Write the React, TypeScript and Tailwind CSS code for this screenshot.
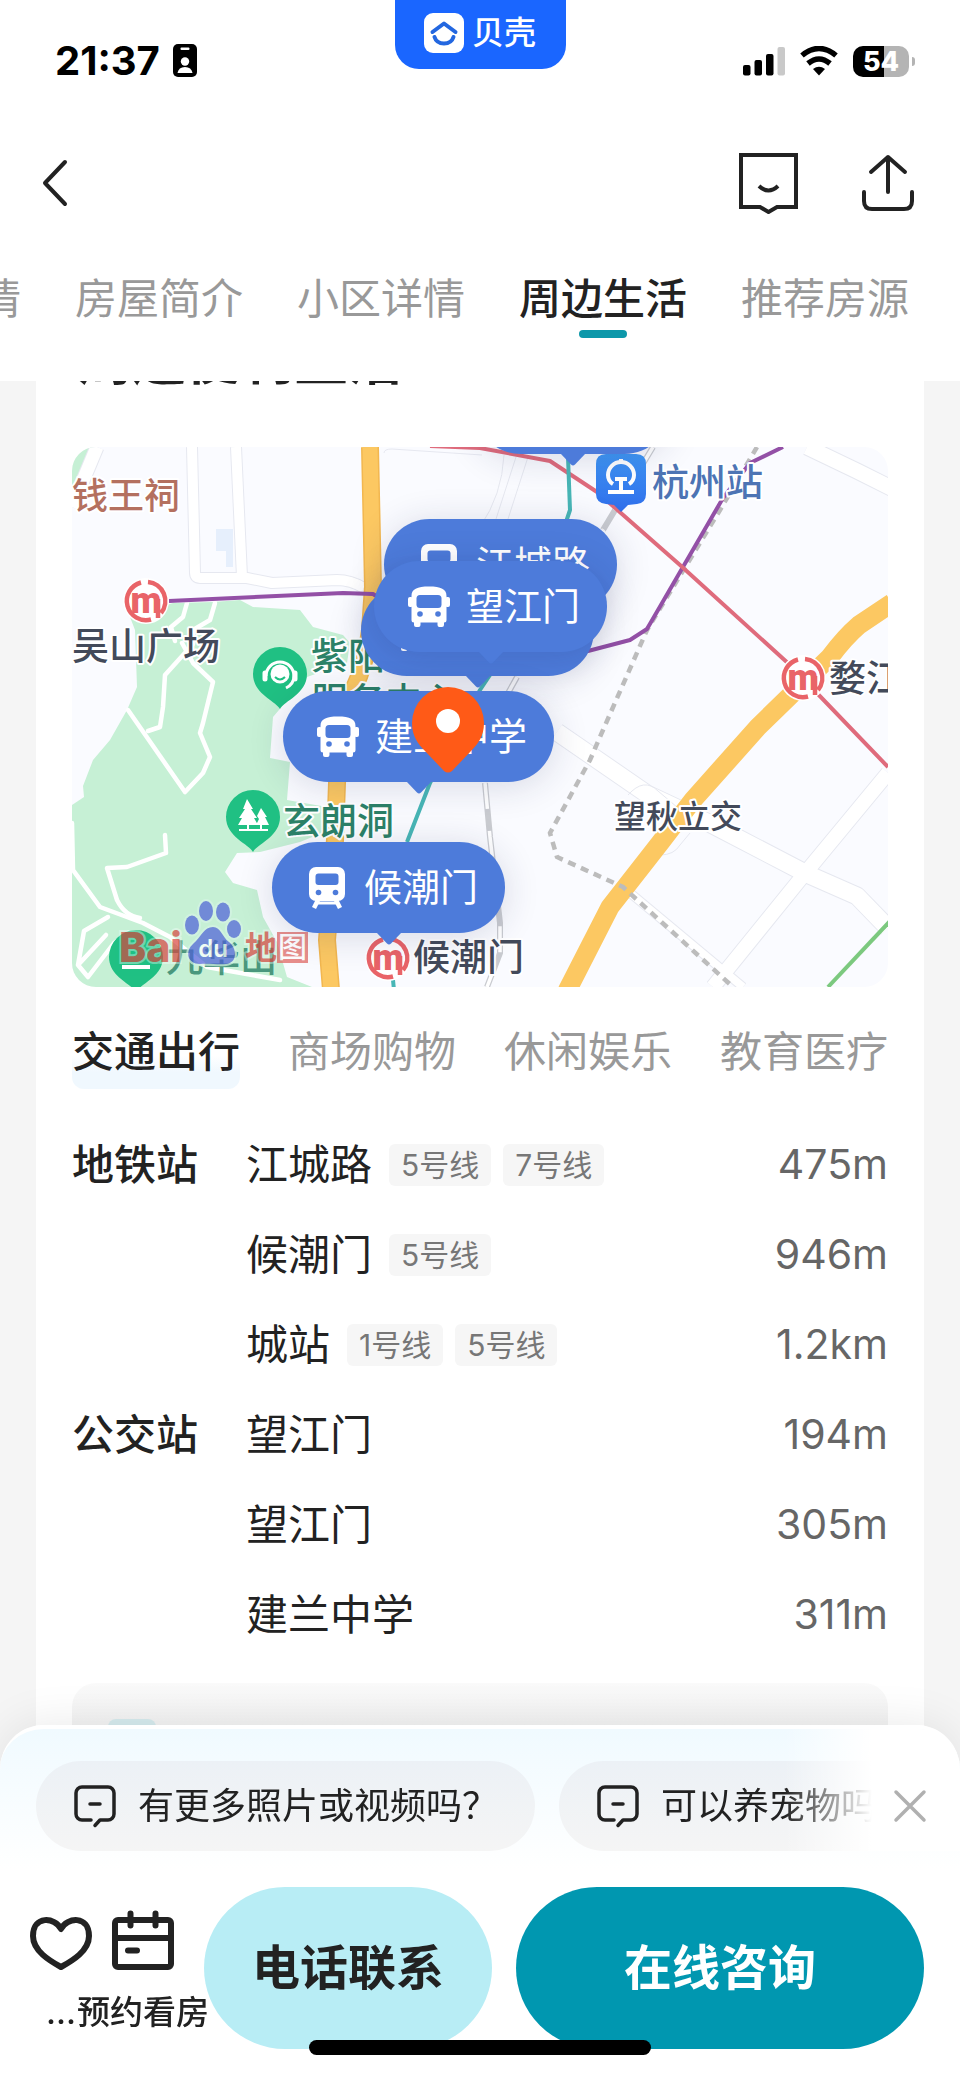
import type { ReactNode } from 'react';

const tabs = ['房源详情', '房屋简介', '小区详情', '周边生活', '推荐房源'];
const categories = ['交通出行', '商场购物', '休闲娱乐', '教育医疗'];

type Stop = { name: string; lines?: string[]; distance: string };

const groups: { title: string; stops: Stop[] }[] = [
  {
    title: '地铁站',
    stops: [
      { name: '江城路', lines: ['5号线', '7号线'], distance: '475m' },
      { name: '候潮门', lines: ['5号线'], distance: '946m' },
      { name: '城站', lines: ['1号线', '5号线'], distance: '1.2km' },
    ],
  },
  {
    title: '公交站',
    stops: [
      { name: '望江门', distance: '194m' },
      { name: '望江门', distance: '305m' },
      { name: '建兰中学', distance: '311m' },
    ],
  },
];

const pins = [
  { name: '城站', icon: 'train', place: 'left-[403px] -top-[84px]' },
  { name: '江城路', icon: 'train', place: 'left-[312px] top-[72px]' },
  { name: '望江门', icon: 'bus', place: 'left-[289px] top-[138px]' },
  { name: '望江门', icon: 'bus', place: 'left-[302px] top-[114px]' },
  { name: '建兰中学', icon: 'bus', place: 'left-[211px] top-[244px]' },
  { name: '候潮门', icon: 'train', place: 'left-[200px] top-[395px]' },
];

function BusIcon() {
  return (
    <svg viewBox="0 0 42 42" className="size-[42px] shrink-0" fill="#fff">
      <path d="M3.500 10C3.500 3 9 0.500 21 0.500S38.500 3 38.500 10V34a2.500 2.500 0 0 1-2.500 2.500V39a2 2 0 0 1-2 2h-2.500a2 2 0 0 1-2-2v-2.500h-17V39a2 2 0 0 1-2 2H8a2 2 0 0 1-2-2v-2.500A2.500 2.500 0 0 1 3.500 34Z" />
      <rect x="0" y="11" width="5" height="10" rx="2" />
      <rect x="37" y="11" width="5" height="10" rx="2" />
      <rect x="8.500" y="9" width="25" height="13" rx="3.500" fill="#4d7bda" />
      <circle cx="12" cy="28" r="2.800" fill="#4d7bda" />
      <circle cx="30" cy="28" r="2.800" fill="#4d7bda" />
    </svg>
  );
}

function TrainIcon() {
  return (
    <svg viewBox="0 0 42 42" className="size-[42px] shrink-0" fill="#fff">
      <rect x="3" y="0" width="36" height="34" rx="7" />
      <path d="M12 33 8 41M30 33l4 8" stroke="#fff" strokeWidth="4.500" />
      <path d="M11 36h20" stroke="#fff" strokeWidth="3" />
      <rect x="9.500" y="6.500" width="23" height="11.500" rx="3" fill="#4d7bda" />
      <circle cx="12.500" cy="25.500" r="2.800" fill="#4d7bda" />
      <circle cx="29.500" cy="25.500" r="2.800" fill="#4d7bda" />
    </svg>
  );
}

function ChatIcon() {
  return (
    <svg viewBox="0 0 44 44" className="size-11 shrink-0" fill="none" stroke="#222" strokeWidth="3.500" strokeLinecap="round" strokeLinejoin="round">
      <path d="M18 36H9a6 6 0 0 1-6-6V9a6 6 0 0 1 6-6h26a6 6 0 0 1 6 6v21a6 6 0 0 1-6 6h-8l-5 5.500" />
      <path d="M17 20h10" />
    </svg>
  );
}

function Metro({ x, y }: { x: number; y: number }) {
  return (
    <g transform={`translate(${x} ${y})`}>
      <circle r="23" fill="#fff" />
      <path d="M-5-18.500A19 19 0 1 0 5 18.500M12 17V-2M2-19A19 19 0 0 1 15 12" fill="none" stroke="#e96468" strokeWidth="4.500" />
      <text y="12" textAnchor="middle" fontFamily="Roboto, sans-serif" fontSize="36" fontWeight="900" fill="#e96468">m</text>
    </g>
  );
}

function GreenPin({ x, y, children }: { x: number; y: number; children?: ReactNode }) {
  return (
    <g transform={`translate(${x} ${y})`}>
      <path d="M0 35C-4 27-27 20-27 0a27 27 0 0 1 54 0C27 20 4 27 0 35Z" fill="#20c083" />
      {children}
    </g>
  );
}

function Label({ x, y, fill, size = 37, children }: { x: number; y: number; fill: string; size?: number; children: string }) {
  return (
    <text x={x} y={y} fill={fill} fontSize={size} fontWeight="500" stroke="#fff" strokeWidth="4" strokeLinejoin="round" paintOrder="stroke">
      {children}
    </text>
  );
}

const roads = [
  { d: 'M25 0 0 60', w: 13 },
  { d: 'M120 0l3 126q0 5 5 5h47l25 5 65-3q14 0 27 8', w: 10 },
  { d: 'M164 0l6 130', w: 10 },
  { d: 'M485 285l90 62 64 30 96 50 50 22 31 32', w: 17 },
  { d: 'M816 326 730 430l-89 110', w: 14 },
  { d: 'M735 0l50 24 40 20', w: 15 },
  { d: 'M551 440l120 100', w: 8 },
];

const trails = [
  'M143 156l-5 17-17 10v14l-28 31-2 32-3 20-12 4',
  'M110 196l11 20 20 19-10 41-3 10 10 24-7 16-18 19-57-82',
  'M115 156l-4 14-12 10 4 14',
  'M93 388l1 18-39 14-20 1 10 32q8 16 23 18',
  'M0 376l1 47 27 37 43 16 27 14 37 30 73 13',
  'M36 470l-24 14-6 34 10 12 26-34 14-10M6 518l28-30',
];

function MapArt() {
  return (
    <svg viewBox="0 0 816 540" preserveAspectRatio="xMinYMin slice" className="h-full w-full" fontFamily="Inter, 'Noto Sans CJK SC', sans-serif">
      <rect width="816" height="540" fill="#fafbff" />
      <path d="M144 82h17v38h-7v-16h-10Z" fill="#e6effc" />
      <path d="M0 16Q4 4 11 0h14L0 46Z" fill="#c6f0d5" />
      <path
        d="M58 170l43-14 40-1 27-2 13 7 47 3 13 17 30 8 7 8-3 20-40 14-34 40-3 41 20 4-3 38 40 7v24l-27 11-40 10-23 1-12 19 8 11 24 7 6 27 14 25 10 35 25 10H0V358l12-8-1-11 10-26 17-20 17-30 10-23-2-57Z"
        fill="#c6f0d5"
      />
      {roads.map((road) => (
        <path key={road.d} d={road.d} fill="none" stroke="#e6e8f0" strokeWidth={road.w + 2} strokeLinejoin="round" />
      ))}
      {roads.map((road) => (
        <path key={road.d} d={road.d} fill="none" stroke="#fff" strokeWidth={road.w} strokeLinejoin="round" />
      ))}
      <g fill="none" stroke="#e6e8f0" strokeWidth="1">
        <path d="M312 6q0-4 8-4l90 6M432 8q-2 40-24 72M444 10l-20 62M456 10l-20 62" />
        <path d="M556 348q16-18 30-4l26 22M588 408q14 0 20-10l10-12" />
      </g>
      {trails.map((d) => (
        <path key={d} d={d} fill="none" stroke="#fff" strokeWidth="4.500" strokeLinejoin="round" strokeLinecap="round" />
      ))}

      {/* Rail tracks */}
      <path d="M581 0l-50 83M445 230l-10 18M413 336l5 54 10 86v30l-13 34" fill="none" stroke="#c9cbd0" strokeWidth="6" />
      <path d="M581 0l-50 83M445 230l-10 18M413 336l5 54 10 86v30l-13 34" fill="none" stroke="#fff" strokeWidth="3.500" strokeDasharray="26 22" />

      {/* Main roads */}
      <g fill="none" strokeLinejoin="round">
        <path d="M298 0l3 140-3 43q-4 34-16 58-14 50-17 95l-2 57-8 100 4 50" stroke="#f2b750" strokeWidth="18" />
        <path d="M298 0l3 140-3 43q-4 34-16 58-14 50-17 95l-2 57-8 100 4 50" stroke="#fcc862" strokeWidth="15" />
        <path d="M820 156l-33 22q-14 12-29 32l-72 70-65 73-33 43-50 64-43 84" stroke="#fcc862" strokeWidth="19" />
      </g>
      <path d="M685 0l-37 63-73 120-44 100-13 30-40 73 7 24 66 30 110 100" fill="none" stroke="#bcbcbc" strokeWidth="4.500" strokeDasharray="8 6" />

      {/* Metro lines */}
      <g fill="none" strokeWidth="4" strokeLinejoin="round">
        <path d="M97 154l174-8 30 1 80 50 135 7 42-11 17-11 76-131 27-35 33-16" stroke="#9350a6" />
        <path d="M358-1l50 2 70 13 47 31 83 73 110 100 98 102" stroke="#df6b7c" />
        <path d="M496 10l2 53-30 90-60 90-50 93-23 59M321 533l1 10" stroke="#48b6b6" />
        <path d="M820 472l-64 68" stroke="#7cc97f" />
      </g>

      <Metro x={74} y={154} />
      <Metro x={731} y={231} />
      <Metro x={316} y={511} />

      <GreenPin x={208} y={227}>
        <g fill="none" stroke="#fff" strokeWidth="3">
          <path d="M-14 2a14 14 0 0 1 28 0q0 8-8 12" />
          <path d="M-15-1v6M15-1v6" strokeWidth="5" strokeLinecap="round" />
        </g>
        <circle r="9.500" fill="#fff" />
        <path d="M-5 3q5 5 10 0" fill="none" stroke="#20c083" strokeWidth="2" />
      </GreenPin>
      <GreenPin x={181} y={370}>
        <path d="M-6-18-0-8h-2l6 9h-3l4 7h-9v4h19v2h-29v-2h8v-4h-9l4-7h-3l6-9h-2ZM8-9l6 9h-2l4 8H9v4H7V8H3l3-6-2-3Z" fill="#fff" />
      </GreenPin>
      <GreenPin x={64} y={510}>
        <path d="M-14 10h28" stroke="#fff" strokeWidth="4" />
      </GreenPin>

      {/* Railway station */}
      <defs>
        <linearGradient id="station" x1="0" y1="0" x2="0" y2="1">
          <stop offset="0%" stopColor="#3f97f6" />
          <stop offset="100%" stopColor="#2f6dea" />
        </linearGradient>
      </defs>
      <path d="M534 7h30q10 0 10 10v30q0 9-9 10l-9 1-7 7-7-7-8-1q-10-1-10-10V17q0-10 10-10Z" fill="url(#station)" />
      <g fill="none" stroke="#fff" strokeWidth="4">
        <path d="M541 37q-5-3-5-9a13 13 0 0 1 26 0q0 6-5 9" />
        <path d="M536 45h26M543 32h12M549 32v12M549 12v4" />
      </g>

      <Label x={0} y={62} size={36} fill="#b4705f">钱王祠</Label>
      <Label x={0} y={213} fill="#434a5a">吴山广场</Label>
      <Label x={239} y={223} fill="#2c8268">紫阳山</Label>
      <Label x={239} y={268} fill="#2c8268">服务中心</Label>
      <Label x={580} y={49} fill="#4d74b4">杭州站</Label>
      <Label x={757} y={245} fill="#434a5a">婺江路</Label>
      <Label x={211} y={388} fill="#2c8268">玄朗洞</Label>
      <Label x={542} y={381} size={32} fill="#434a5a">望秋立交</Label>
      <Label x={341} y={524} fill="#434a5a">候潮门</Label>
      <text x="94" y="525" fontSize="37" fontWeight="500" fill="#2c8268" opacity="0.800">九华山</text>

      {/* Map provider mark */}
      <g opacity="0.700">
        <g fill="#d9453f" stroke="#fff" strokeOpacity="0.500" strokeWidth="4" paintOrder="stroke">
          <text x="47" y="515" fontSize="41" fontWeight="800">Bai</text>
          <text x="173" y="512" fontSize="32" fontWeight="700">地</text>
        </g>
        <g fill="#4e5ed8" stroke="#d5f3e4" strokeWidth="4" paintOrder="stroke">
          <ellipse cx="120" cy="478" rx="7" ry="9.500" />
          <ellipse cx="134" cy="464" rx="7" ry="10" />
          <ellipse cx="151" cy="465" rx="7" ry="9.500" />
          <ellipse cx="162" cy="482" rx="7" ry="9" />
          <path d="M141 480c8 0 9 10 16 15 8 6 9 21-3 22-8 1-17-1-26 0-13 0-15-13-7-20 9-8 11-17 20-17Z" />
        </g>
        <text x="141" y="510" textAnchor="middle" fontSize="24" fontWeight="600" fill="#fff">du</text>
        <rect x="205" y="485" width="31" height="31" fill="#e0605c" />
        <text x="206" y="511" fontSize="29" fontWeight="500" fill="#fff">图</text>
      </g>
    </svg>
  );
}

function TransitMap() {
  return (
    <div className="relative mt-[54px] h-[540px] overflow-hidden rounded-3xl">
      <MapArt />
      {pins.map((pin, i) => (
        <button
          key={i}
          type="button"
          className={`absolute flex h-[91px] items-center gap-4 rounded-full bg-[#4d7bda] pr-[27px] pl-[34px] text-[38px] whitespace-nowrap text-white shadow-[0_4px_36px_rgba(30,40,90,0.16)] ${pin.place}`}
        >
          {pin.icon === 'bus' ? <BusIcon /> : <TrainIcon />}
          {pin.name}
          <svg viewBox="0 0 26 13" className="absolute top-full left-1/2 -mt-px h-[13px] w-[26px] -translate-x-1/2">
            <path d="M0 0h26L15 11.500q-2 2-4 0Z" fill="#4d7bda" />
          </svg>
        </button>
      ))}
      <svg viewBox="0 0 74 88" className="absolute top-[239px] left-[339px] h-[88px] w-[74px]">
        <path d="M37 1a36 36 0 0 1 36 36c0 13-6 21-13 28L41 85q-4 3-8 0L14 65C7 58 1 50 1 37A36 36 0 0 1 37 1Z" fill="#ff5a17" />
        <circle cx="37" cy="35" r="12" fill="#fff" />
      </svg>
    </div>
  );
}

function StatusBar() {
  return (
    <div className="grid h-[122px] grid-cols-3 items-center">
      <div className="flex items-center gap-3 pl-[55px] text-black">
        <span className="text-[40px] leading-none font-bold">21:37</span>
        <svg viewBox="0 0 26 34" className="h-[34px] w-[26px]">
          <rect x="1" y="0" width="24" height="33" rx="5" fill="#000" />
          <rect x="8.500" y="3.500" width="9" height="2.500" rx="1" fill="#fff" />
          <circle cx="13" cy="17.500" r="4.200" fill="#fff" />
          <path d="M5.500 29q1-6 7.500-6t7.500 6Z" fill="#fff" />
        </svg>
      </div>
      <div className="flex h-[69px] w-[171px] items-center justify-center gap-2 self-start justify-self-center rounded-b-3xl bg-[#1a66ff] pb-1 text-white">
        <svg viewBox="0 0 40 40" className="size-10">
          <rect width="40" height="40" rx="9" fill="#fff" />
          <g fill="none" stroke="#2367e0" strokeWidth="4" strokeLinecap="round" strokeLinejoin="round">
            <path d="M8.500 19 20 10.500 31.500 19" />
            <path d="M10.500 24q2 6.500 9.500 6.500t9.500-6.500" />
          </g>
        </svg>
        <span className="text-[32px] leading-none font-medium">贝壳</span>
      </div>
      <div className="flex items-center justify-end gap-[14px] pr-[45px]">
        <svg viewBox="0 0 42 30" className="h-[30px] w-[42px]">
          <rect x="0" y="19" width="7.500" height="10.500" rx="2" />
          <rect x="11.500" y="14" width="7.500" height="15.500" rx="2" />
          <rect x="23" y="8" width="7.500" height="21.500" rx="2" />
          <rect x="34.500" y="1" width="7.500" height="28.500" rx="2" fill="#c9c9c9" />
        </svg>
        <svg viewBox="0 0 40 30" className="h-[30px] w-10">
          <path d="M3 9.500Q20-4.500 37 9.500" fill="none" stroke="#000" strokeWidth="5.500" />
          <path d="M9 17.500q11-9 22 0" fill="none" stroke="#000" strokeWidth="5.500" />
          <path d="M14 23q6-4.500 12 0l-6 6.500Z" />
        </svg>
        <div className="flex items-center gap-[3px]">
          <span className="flex h-[31px] w-14 items-center justify-center rounded-[10px] bg-linear-to-r from-black from-55% to-[#b4b4b4] to-55% text-[27px] leading-none font-extrabold text-white">
            54
          </span>
          <span className="h-[9px] w-[3px] rounded-r-full bg-[#b4b4b4]" />
        </div>
      </div>
    </div>
  );
}

function Header() {
  return (
    <header className="sticky top-0 z-10 bg-white">
      <StatusBar />
      <div className="flex h-[122px] items-center justify-between pr-[44px] pl-[38px]">
        <button type="button" aria-label="返回">
          <svg viewBox="0 0 34 52" className="h-[52px] w-[34px]" fill="none" stroke="#222" strokeWidth="4" strokeLinecap="round" strokeLinejoin="round">
            <path d="M27 5 7 26l20 21" />
          </svg>
        </button>
        <div className="flex items-center gap-[62px]">
          <button type="button" aria-label="消息">
            <svg viewBox="0 0 60 62" className="h-[62px] w-[60px]" fill="none" stroke="#222" strokeWidth="4">
              <path d="M3 3h55v52H39l-8.500 5L22 55H3Z" />
              <path d="M21 34q9.500 9 19 0" />
            </svg>
          </button>
          <button type="button" aria-label="分享">
            <svg viewBox="0 0 56 60" className="h-[60px] w-[56px]" fill="none" stroke="#222" strokeWidth="4" strokeLinecap="round" strokeLinejoin="round">
              <path d="M28 39V4M11 19 28 4l17 15" />
              <path d="M4 39v9q0 8 8 8h32q8 0 8-8v-9" />
            </svg>
          </button>
        </div>
      </div>
      <nav className="flex h-[137px] items-start justify-end gap-[54px] overflow-hidden pt-[25px] pr-[51px]">
        {tabs.map((tab) => {
          const active = tab === '周边生活';
          return (
            <a key={tab} href="#" className="flex shrink-0 flex-col items-center">
              <span className={`text-[42px] leading-[60px] ${active ? 'font-medium text-[#222]' : 'text-[#999]'}`}>{tab}</span>
              {active && <span className="mt-px h-2 w-12 rounded-full bg-[#0d98aa]" />}
            </a>
          );
        })}
      </nav>
    </header>
  );
}

function StopTable() {
  return (
    <table className="mt-[31px] w-full text-left text-[42px] text-[#222]">
      {groups.map((group) => (
        <tbody key={group.title}>
          {group.stops.map((stop, i) => (
            <tr key={i} className="h-[90px]">
              {i === 0 && (
                <th scope="rowgroup" rowSpan={group.stops.length} className="w-[174px] p-0 align-top leading-[90px] font-medium">
                  {group.title}
                </th>
              )}
              <td className="p-0">
                <div className="flex items-center">
                  <span className="mr-[17px] leading-[60px]">{stop.name}</span>
                  {stop.lines?.map((line) => (
                    <span key={line} className="mr-3 rounded-md bg-[#f6f6f6] px-3 text-[30px] leading-[42px] text-[#777]">
                      {line}
                    </span>
                  ))}
                </div>
              </td>
              <td className="p-0 text-right text-[41px] text-[#666]">{stop.distance}</td>
            </tr>
          ))}
        </tbody>
      ))}
    </table>
  );
}

function BottomSheet() {
  return (
    <div className="fixed inset-x-0 bottom-0 z-20 rounded-t-[44px] border-t-4 border-white bg-linear-to-b from-[#f0faff] to-white to-40% shadow-[0_-4px_44px_rgba(0,0,0,0.08)]">
      <div className="relative flex gap-6 overflow-hidden rounded-tr-[40px] pt-8 pl-9">
        {['有更多照片或视频吗？', '可以养宠物吗？'].map((question) => (
          <button
            key={question}
            type="button"
            className="flex h-[90px] shrink-0 items-center gap-[21px] rounded-full bg-linear-to-b from-[#ecf1f6] to-[#f5f5f5] px-[37px] text-[36px] whitespace-nowrap text-[#222]"
          >
            <ChatIcon />
            {question}
          </button>
        ))}
        <div className="absolute inset-y-0 right-0 flex w-44 items-center justify-end bg-linear-to-r from-white/0 to-white to-50% pt-8 pr-8">
          <button type="button" aria-label="关闭">
            <svg viewBox="0 0 36 36" className="size-9" stroke="#b0b0b0" strokeWidth="3.500" strokeLinecap="round">
              <path d="M4 4l28 28M32 4 4 32" />
            </svg>
          </button>
        </div>
      </div>
      <div className="flex gap-6 pt-9 pr-9 pb-[30px] pl-[30px] text-[48px] font-medium">
        <div className="mr-1.5 flex gap-5 text-[33px] text-[#222]">
          <button type="button" aria-label="收藏" className="flex w-[62px] flex-col items-center pt-[22px]">
            <svg viewBox="0 0 62 62" className="size-[62px]" fill="none" stroke="#222" strokeWidth="6" strokeLinejoin="round">
              <path d="M31 20C25 8 3 6 3 27c0 15 17 25 28 31 11-6 28-16 28-31C59 6 37 8 31 20Z" />
            </svg>
            <span className="mt-[17px] leading-[48px]">...</span>
          </button>
          <button type="button" className="flex w-[62px] flex-col items-center pt-[22px] whitespace-nowrap">
            <svg viewBox="0 0 62 62" className="size-[62px]" fill="none" stroke="#222" strokeWidth="6" strokeLinecap="round" strokeLinejoin="round">
              <rect x="3" y="11" width="56" height="47" rx="3" />
              <path d="M3 29h56M18.500 4.500v12M43.500 4.500v12M16 41.500h9" />
            </svg>
            <span className="mt-[17px] leading-[48px]">预约看房</span>
          </button>
        </div>
        <button type="button" className="h-[162px] flex-[288] rounded-full bg-[#b8edf5] font-semibold text-[#222]">
          电话联系
        </button>
        <button type="button" className="h-[162px] flex-[408] rounded-full bg-[#0097b0] font-semibold text-white">
          在线咨询
        </button>
      </div>
      <div className="absolute bottom-6 left-1/2 h-[15px] w-[342px] -translate-x-1/2 rounded-full bg-black" />
    </div>
  );
}

export default function App() {
  return (
    <div className="flex min-h-screen flex-col bg-[#f5f5f5] font-['Inter','Noto_Sans_CJK_SC',sans-serif]">
      <Header />
      <main className="mx-9 -mt-[52px] flex-1 bg-white px-9">
        <h2 className="pl-1.5 text-[54px] leading-[64px] font-bold text-[#222]">周边便利生活</h2>
        <TransitMap />
        <div className="mt-[35px] flex justify-between">
          {categories.map((category, i) => (
            <button
              key={category}
              type="button"
              className={`h-[67px] pb-[7px] text-[42px] leading-[60px] ${
                i === 0
                  ? 'rounded-xl bg-linear-to-b from-transparent from-50% to-[#f0f8fe] to-75% font-medium text-[#222]'
                  : 'text-[#999]'
              }`}
            >
              {category}
            </button>
          ))}
        </div>
        <StopTable />
        <div className="mt-[23px] h-24 rounded-3xl bg-linear-to-b from-[#fafafa] to-[#f3f3f3] to-40% px-9 pt-9">
          <div className="size-12 rounded-lg bg-[#d6ebee]" />
        </div>
      </main>
      <BottomSheet />
    </div>
  );
}
